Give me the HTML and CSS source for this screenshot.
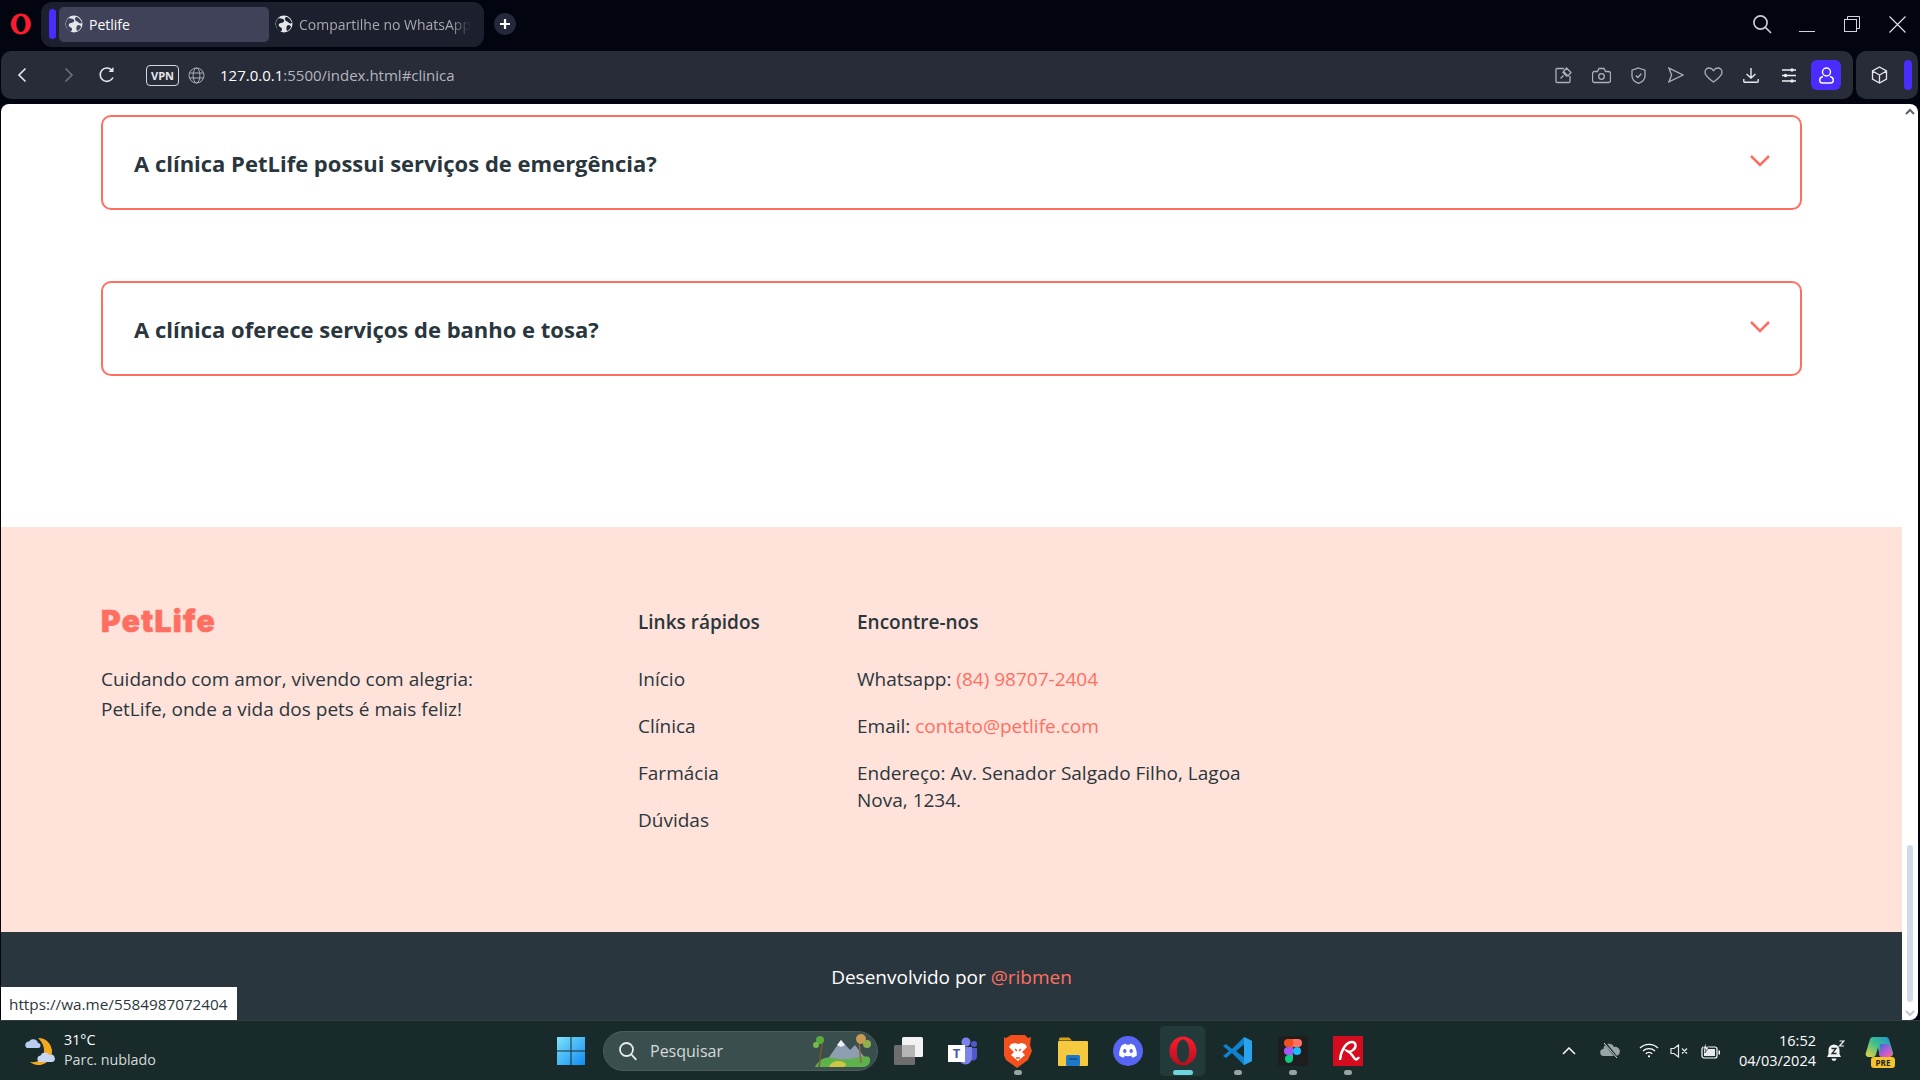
FILE: index.html
```html
<!DOCTYPE html>
<html lang="pt-BR">

<head>
  <meta charset="UTF-8">
  <meta name="viewport" content="width=device-width, initial-scale=1.0">
  <title>Petlife</title>
  <link rel="stylesheet" href="styles.css">
</head>

<body>
  <!-- Opera title bar with tabs -->
  <header class="titlebar">
    <svg class="opera-logo" width="22" height="24" viewBox="0 0 22 24"><path fill-rule="evenodd" d="M11 1.500c5.600 0 10 4.700 10 10.500s-4.400 10.500-10 10.500S1 17.800 1 12 5.400 1.500 11 1.500zM11 4C8.400 4 6.400 7.600 6.400 12s2 8 4.600 8 4.600-3.600 4.600-8-2-8-4.600-8z" fill="#ff1b2d"/></svg>
    <div class="tab-group">
      <span class="tab-accent"></span>
      <div class="tab tab-active">
        <svg class="tab-icon" width="18" height="18" viewBox="0 0 18 18"><circle cx="9" cy="9" r="8.500" fill="#e4e5ea"/><path d="M4 3c2 1 4 0 5 2s-2 3-3 3-3 1-2 3 3 1 3 3-1 2-2 3C3 16 .5 12 1 8s2-4 3-5zM12 2c2 1 4 3 5 6-2 1-3 0-4-1s-3-1-3-3 1-2 2-2zM13 10c2 0 3 1 3 2-1 2-2 3-4 4-1-2-1-5 1-6z" fill="#3f4259"/></svg>
        <span>Petlife</span>
      </div>
      <div class="tab tab-idle">
        <svg class="tab-icon" width="18" height="18" viewBox="0 0 18 18"><circle cx="9" cy="9" r="8.500" fill="#e4e5ea"/><path d="M4 3c2 1 4 0 5 2s-2 3-3 3-3 1-2 3 3 1 3 3-1 2-2 3C3 16 .5 12 1 8s2-4 3-5zM12 2c2 1 4 3 5 6-2 1-3 0-4-1s-3-1-3-3 1-2 2-2zM13 10c2 0 3 1 3 2-1 2-2 3-4 4-1-2-1-5 1-6z" fill="#1c1f2e"/></svg>
        <span class="tab-title">Compartilhe no WhatsApp</span>
      </div>
    </div>
    <button class="new-tab">
      <svg width="12" height="12" viewBox="0 0 12 12"><path d="M6 1v10M1 6h10" stroke="#fff" stroke-width="2.200"/></svg>
    </button>
    <div class="window-controls">
      <svg class="win-search" width="20" height="20" viewBox="0 0 20 20" fill="none" stroke="#c9cad0" stroke-width="1.700"><circle cx="8.500" cy="8.500" r="6.600"/><path d="M13.400 13.400l5.600 5.600"/></svg>
      <svg class="win-min" width="16" height="16" viewBox="0 0 16 16"><path d="M0 15.500h16" stroke="#d5d6da" stroke-width="1"/></svg>
      <svg class="win-max" width="16" height="16" viewBox="0 0 16 16" fill="none" stroke="#d5d6da" stroke-width="1"><rect x=".5" y="3.500" width="12" height="12"/><path d="M3.500 3.500V.5h12v12h-3"/></svg>
      <svg class="win-close" width="17" height="17" viewBox="0 0 17 17"><path d="M.5.5l16 16M16.500.5l-16 16" stroke="#e2e3e6" stroke-width="1.100"/></svg>
    </div>
  </header>

  <!-- Address bar and sidebar panel -->
  <div class="toolbar-row">
    <nav class="toolbar">
      <svg class="nav-back" width="10" height="16" viewBox="0 0 10 16"><path d="M8.500 1.500L2 8l6.500 6.500" fill="none" stroke="#e6e7ea" stroke-width="1.600"/></svg>
      <svg class="nav-forward" width="10" height="16" viewBox="0 0 10 16"><path d="M1.500 1.500L8 8l-6.500 6.500" fill="none" stroke="#6d7078" stroke-width="1.600"/></svg>
      <svg class="nav-reload" width="18" height="18" viewBox="0 0 18 18" fill="none"><path d="M15 11.500A6.700 6.700 0 1 1 13.700 4" stroke="#e6e7ea" stroke-width="1.600"/><path d="M15.500 1v5h-5z" fill="#e6e7ea"/></svg>
      <span class="vpn-badge">VPN</span>
      <svg class="globe" width="17" height="17" viewBox="0 0 17 17" fill="none" stroke="#aeb0b8" stroke-width="1"><circle cx="8.500" cy="8.500" r="7.500"/><ellipse cx="8.500" cy="8.500" rx="3.400" ry="7.500"/><path d="M1.500 6h14M1.500 11h14"/></svg>
      <span class="url"><span class="url-host">127.0.0.1</span>:5500/index.html#clinica</span>
      <div class="toolbar-actions">
        <span class="tool-slot"><svg width="17" height="17" viewBox="0 0 17 17" fill="none" stroke="#aeb0b8" stroke-width="1.300"><path d="M9 1.500H2A1 1 0 0 0 1 2.500v12a1 1 0 0 0 1 1h12a1 1 0 0 0 1-1V9"/><path d="M5.500 11.500l3-3M7.500 5l4.500 4.500M11.500 1l4.500 4.500-3 3.500-4.500-4.500z"/></svg></span>
        <span class="tool-slot"><svg width="19" height="17" viewBox="0 0 19 17" fill="none" stroke="#aeb0b8" stroke-width="1.300"><path d="M2.500 4.500h3l1.500-3h5l1.500 3h3a2 2 0 0 1 2 2v7a2 2 0 0 1-2 2h-14a2 2 0 0 1-2-2v-7a2 2 0 0 1 2-2z"/><circle cx="9.500" cy="9.500" r="2.800"/></svg></span>
        <span class="tool-slot"><svg width="15" height="17" viewBox="0 0 15 17" fill="none" stroke="#aeb0b8" stroke-width="1.300"><path d="M7.500 1L14 3.200V9c0 3.500-3 6-6.500 7.300C4 15 1 12.500 1 9V3.200z"/><path d="M4.800 8.500l2 2 3.500-3.800"/></svg></span>
        <span class="tool-slot"><svg width="16" height="16" viewBox="0 0 16 16" fill="none" stroke="#aeb0b8" stroke-width="1.300"><path d="M1 1.200L15 8 1 14.800 3.600 8z"/></svg></span>
        <span class="tool-slot"><svg width="19" height="16" viewBox="0 0 19 16" fill="none" stroke="#aeb0b8" stroke-width="1.300"><path d="M9.500 15C5 11.500 1 9 1 5.200 1 2.800 2.800 1 5 1c2 0 3.500 1 4.500 2.600C10.500 2 12 1 14 1c2.200 0 4 1.800 4 4.200C18 9 14 11.500 9.500 15z"/></svg></span>
        <span class="tool-slot"><svg width="16" height="16" viewBox="0 0 16 16" fill="none" stroke="#e6e7ea" stroke-width="1.400"><path d="M8 1v10M3.500 7L8 11l4.500-4M.8 12v2.200a1 1 0 0 0 1 1h12.400a1 1 0 0 0 1-1V12"/></svg></span>
        <span class="tool-slot"><svg width="16" height="15" viewBox="0 0 16 15" stroke="#f0f0f2" stroke-width="1.300" fill="#f0f0f2"><path d="M1 2h14M1 7.500h14M1 13h14" fill="none"/><circle cx="11" cy="2" r="1"/><circle cx="4.500" cy="7.500" r="1"/><circle cx="11" cy="13" r="1"/></svg></span>
        <span class="tool-slot">
          <span class="profile-btn">
            <svg width="15" height="17" viewBox="0 0 15 17" fill="none" stroke="#fff" stroke-width="1.400"><circle cx="7.500" cy="5" r="4"/><path d="M4 9.500c-2 .5-3.300 2-3.300 3.700 0 1.800 1.300 2.800 3 2.800h7.600c1.700 0 3-1 3-2.800 0-1.700-1.300-3.200-3.300-3.700"/></svg>
          </span>
        </span>
      </div>
    </nav>
    <aside class="side-panel">
      <svg width="17" height="18" viewBox="0 0 17 18" fill="none" stroke="#e6e7ea" stroke-width="1.300"><path d="M8.500 1l7 4v8l-7 4-7-4V5zM1.500 5l7 4 7-4M8.500 9v8"/></svg>
      <span class="panel-accent"></span>
    </aside>
  </div>

  <!-- The page being viewed -->
  <main class="viewport">
    <div class="page">
      <section class="faq">
        <div class="faq-item">
          <h3>A clínica PetLife possui serviços de emergência?</h3>
          <svg class="chevron" width="20" height="12" viewBox="0 0 20 12"><path d="M1 1l9 9 9-9" fill="none" stroke="#ff6f61" stroke-width="2.500"/></svg>
        </div>
        <div class="faq-item">
          <h3>A clínica oferece serviços de banho e tosa?</h3>
          <svg class="chevron" width="20" height="12" viewBox="0 0 20 12"><path d="M1 1l9 9 9-9" fill="none" stroke="#ff6f61" stroke-width="2.500"/></svg>
        </div>
      </section>

      <footer class="footer">
        <div class="footer-brand">
          <div class="logo">PetLife</div>
          <p>Cuidando com amor, vivendo com alegria:<br>PetLife, onde a vida dos pets é mais feliz!</p>
        </div>
        <div class="footer-links">
          <h4>Links rápidos</h4>
          <ul>
            <li>Início</li>
            <li>Clínica</li>
            <li>Farmácia</li>
            <li>Dúvidas</li>
          </ul>
        </div>
        <div class="footer-contact">
          <h4>Encontre-nos</h4>
          <ul>
            <li>Whatsapp: <a>(84) 98707-2404</a></li>
            <li>Email: <a>contato@petlife.com</a></li>
            <li>Endereço: Av. Senador Salgado Filho, Lagoa Nova, 1234.</li>
          </ul>
        </div>
      </footer>

      <div class="credits">Desenvolvido por <a>@ribmen</a></div>
    </div>

    <div class="scrollbar">
      <svg class="scroll-arrow" width="10" height="7" viewBox="0 0 10 7"><path d="M1 6l4-4 4 4" fill="none" stroke="#5d6268" stroke-width="2"/></svg>
      <span class="scroll-track"><span class="scroll-thumb"></span></span>
      <svg class="scroll-arrow" width="10" height="7" viewBox="0 0 10 7"><path d="M1 1l4 4 4-4" fill="none" stroke="#c4c8cc" stroke-width="2"/></svg>
    </div>

    <div class="status-link">https://wa.me/5584987072404</div>
  </main>

  <!-- Windows taskbar -->
  <footer class="taskbar">
    <div class="weather">
      <svg width="32" height="30" viewBox="0 0 32 30">
        <path d="M14 2a13.500 13.500 0 1 1-8 24c9 1 15-4 14-12 0-5-3-9-6-12z" fill="#f4a81e"/>
        <path d="M3 12a3.500 3.500 0 0 1 2-6.500 5 5 0 0 1 9 1.500 2.500 2.500 0 0 1 0 5z" fill="#b9cdf0"/>
        <path d="M15 26a3.500 3.500 0 0 1 1.500-6.500 5 5 0 0 1 9-.5 3.500 3.500 0 0 1 3 7z" fill="#c6d6f2"/>
      </svg>
      <div class="weather-text">
        <span class="weather-temp">31°C</span>
        <span class="weather-desc">Parc. nublado</span>
      </div>
    </div>

    <div class="task-center">
      <svg class="task-icon" width="30" height="30" viewBox="0 0 30 30">
        <defs><linearGradient id="winGrad" x1="0" y1="0" x2="1" y2="1"><stop offset="0" stop-color="#7fe3fb"/><stop offset="1" stop-color="#0f8cf2"/></linearGradient></defs>
        <path d="M1 1h13.500v13.500H1zM15.500 1H29v13.500H15.500zM1 15.500h13.500V29H1zM15.500 15.500H29V29H15.500z" fill="url(#winGrad)"/>
      </svg>
      <div class="search-box">
        <svg width="20" height="20" viewBox="0 0 20 20" fill="none" stroke="#e6eaea" stroke-width="1.800"><circle cx="8.500" cy="8.500" r="6.500"/><path d="M13.300 13.300l5 5.500"/></svg>
        <span>Pesquisar</span>
        <svg class="search-art" width="62" height="36" viewBox="0 0 62 36">
          <path d="M14 30L30 7l9 10 5-5 14 18z" fill="#8f9db0"/>
          <path d="M26 12l4-5 4 5-4 2z" fill="#eef2f6"/>
          <path d="M4 34c6-12 16-10 24-8s24-4 30-2c3 4 0 10-6 10z" fill="#5fb14c"/>
          <path d="M18 34c2-6 10-8 16-4 2 2 0 4-2 4z" fill="#d1c544"/>
          <path d="M8 34L11 10" stroke="#7a5a2b" stroke-width="1.500"/>
          <circle cx="9" cy="7" r="4" fill="#5aa83e"/>
          <circle cx="5" cy="12" r="3" fill="#6ebc4a"/>
          <path d="M50 30L48 8" stroke="#8a6a3a" stroke-width="1.500"/>
          <circle cx="50" cy="6" r="5" fill="#c89a55"/>
          <circle cx="56" cy="11" r="4" fill="#8fb04a"/>
        </svg>
      </div>
      <!-- Task view -->
      <svg class="task-icon" width="30" height="30" viewBox="0 0 30 30">
        <rect x="1" y="9" width="21" height="20" rx="1.500" fill="#6d6d6d"/>
        <rect x="9" y="1" width="21" height="20" rx="1.500" fill="#f2f2f2"/>
        <rect x="9" y="9" width="13" height="12" fill="#b5b5b5"/>
      </svg>
      <!-- Teams -->
      <span class="task-icon teams">
        <svg width="30" height="30" viewBox="0 0 30 30">
          <circle cx="18" cy="6" r="4.500" fill="#7b83eb"/>
          <circle cx="26" cy="8" r="3" fill="#5059c9"/>
          <path d="M21 12h8v9a4 4 0 0 1-6 3z" fill="#5059c9"/>
          <path d="M11 11h13v11a6.500 6.500 0 0 1-13 0z" fill="#7b83eb"/>
        </svg>
        <b class="teams-t">T</b>
      </span>
      <!-- Brave -->
      <span class="task-icon has-dot">
        <svg width="28" height="34" viewBox="0 0 28 34">
          <path d="M7 1h14l3 3 3-1-1 8 2 6-4 9-11 8-11-8-4-9 2-6-1-8 3 1z" fill="#f4501e"/>
          <path d="M7 10l4-1 3 1 3-1 4 1 2 3-5 5 3 3-7 6-7-6 3-3-5-5z" fill="#fff"/>
          <path d="M11 15l2 2M17 15l-2 2M12 24h4" stroke="#f4501e" stroke-width="1.400"/>
        </svg>
      </span>
      <!-- File explorer -->
      <svg class="task-icon" width="30" height="30" viewBox="0 0 30 30">
        <path d="M1 3a1.500 1.500 0 0 1 1.500-1.500H11l3 3h-13z" fill="#d9a11a"/>
        <rect x="0" y="5" width="30" height="25" rx="1" fill="#f7c93e"/>
        <rect x="8" y="19" width="14" height="11" rx="1.500" fill="#1d78c8"/>
        <path d="M11 23h8" stroke="#0c4f8c" stroke-width="1.500"/>
      </svg>
      <!-- Discord -->
      <svg class="task-icon" width="30" height="30" viewBox="0 0 30 30">
        <circle cx="15" cy="15" r="15" fill="#5865f2"/>
        <path d="M9 9c2-1 3.500-1.300 4-1.300l.5 1h3l.5-1c.5 0 2 .3 4 1.300 2 3 3 6.500 2.800 10.500-1.500 1.200-3 1.800-4.500 2.200l-1-1.700 1.500-.8c-3 1.300-6.600 1.300-9.600 0l1.500.8-1 1.700c-1.500-.4-3-1-4.500-2.200C6 15.500 7 12 9 9z" fill="#fff"/>
        <ellipse cx="11.800" cy="15" rx="1.700" ry="2" fill="#5865f2"/>
        <ellipse cx="18.200" cy="15" rx="1.700" ry="2" fill="#5865f2"/>
      </svg>
      <!-- Opera, the active window -->
      <span class="task-icon task-active">
        <svg width="28" height="30" viewBox="0 0 28 30">
          <defs><linearGradient id="operaGrad" x1="0" y1="0" x2="0" y2="1"><stop offset="0" stop-color="#ff1b2d"/><stop offset="1" stop-color="#b3101f"/></linearGradient></defs>
          <path fill-rule="evenodd" d="M14 .5c7.500 0 13.500 6.500 13.500 14.500S21.500 29.500 14 29.500.5 23 .5 15 6.500.5 14 .5zM14 3.500c-3.500 0-6.200 5.100-6.200 11.500s2.700 11.500 6.200 11.500 6.200-5.100 6.200-11.500S17.500 3.500 14 3.500z" fill="url(#operaGrad)"/>
        </svg>
      </span>
      <!-- VS Code -->
      <span class="task-icon has-dot">
        <svg width="30" height="30" viewBox="0 0 30 30">
          <path d="M21 1l8 4v20l-8 4-12-12-6 5-3-2 6-5-6-5 3-2 6 5zM21 8.500L13 15l8 6.500z" fill="#0f82d1"/>
          <path d="M21 1l8 4v20l-8 4z" fill="#2aa3ef"/>
        </svg>
      </span>
      <!-- Figma -->
      <span class="task-icon has-dot">
        <svg class="figma" width="30" height="30" viewBox="0 0 30 30">
          <rect width="30" height="30" rx="2" fill="#1e1e1e"/>
          <path d="M10 3h5v8h-5a4 4 0 0 1 0-8z" fill="#f24e1e"/>
          <path d="M15 3h5a4 4 0 0 1 0 8h-5z" fill="#ff7262"/>
          <path d="M10 11h5v8h-5a4 4 0 0 1 0-8z" fill="#a259ff"/>
          <circle cx="19" cy="15" r="4" fill="#1abcfe"/>
          <path d="M10 19h5v4a4 4 0 1 1-5-4z" fill="#0acf83"/>
        </svg>
      </span>
      <!-- Avira -->
      <span class="task-icon has-dot">
        <svg width="30" height="30" viewBox="0 0 30 30">
          <rect width="30" height="30" fill="#d50c1f"/>
          <path d="M7 24C8 14 13 6 19 6c4 0 5 5 1 8-2 2-5 2-6 1 4 1 6 6 8 8 1 1 3 0 4-2" fill="none" stroke="#fff" stroke-width="2.400"/>
        </svg>
      </span>
    </div>

    <div class="tray">
      <svg width="14" height="8" viewBox="0 0 14 8"><path d="M1 7l6-6 6 6" fill="none" stroke="#fff" stroke-width="1.500"/></svg>
      <svg class="tray-cloud" width="21" height="17" viewBox="0 0 21 17"><path d="M4 14a3.500 3.500 0 0 1-.5-7A5.500 5.500 0 0 1 14 5a4.500 4.500 0 0 1 2.500 9z" fill="#9aa5a5"/><path d="M5 1l12 15" stroke="#16292a" stroke-width="2.500"/><path d="M4 1l13 15" stroke="#d5dada" stroke-width="1"/></svg>
      <svg class="tray-wifi" width="20" height="15" viewBox="0 0 20 15" fill="none" stroke="#fff" stroke-width="1.300"><path d="M1 5a13 13 0 0 1 18 0M4 8a9 9 0 0 1 12 0M6.800 10.800a4.500 4.500 0 0 1 6.400 0"/><circle cx="10" cy="13.300" r="1.100" fill="#fff" stroke="none"/></svg>
      <svg class="tray-sound" width="19" height="14" viewBox="0 0 19 14" fill="none" stroke="#e6eaea" stroke-width="1.200"><path d="M1 4.500h3L8.500 1v12L4 9.500H1zM12 4.500l5 5M17 4.500l-5 5"/></svg>
      <svg class="tray-battery" width="20" height="16" viewBox="0 0 20 16"><rect x="1" y="4" width="15" height="11" rx="2" fill="none" stroke="#fff" stroke-width="1.200"/><rect x="3" y="6" width="11" height="7" fill="#e6eaea"/><path d="M17.500 7.500h1.500v4h-1.500z" fill="#fff"/><path d="M5 0L2 6h3l-1 4 4-6H5z" fill="#fff" stroke="#16292a" stroke-width=".6"/></svg>
      <div class="clock">
        <span>16:52</span>
        <span>04/03/2024</span>
      </div>
      <svg class="tray-bell" width="18" height="22" viewBox="0 0 18 22"><path d="M7 4.500a5.500 5.500 0 0 0-5.500 5.500v4L0 17h14l-1.500-3v-4A5.500 5.500 0 0 0 7 4.500zM4.500 18.500h5a2.500 2.500 0 0 1-5 0z" fill="#f2f4f4"/><path d="M4.500 8.500h4.500l-4 5h4.500" fill="none" stroke="#192a2b" stroke-width="1.300"/><path d="M12.500 1h4.500l-4.500 5H17" fill="none" stroke="#f2f4f4" stroke-width="1.200"/></svg>
      <span class="copilot">
        <svg width="29" height="25" viewBox="0 0 29 25">
          <defs>
            <linearGradient id="copA" x1="0" y1="1" x2="1" y2="0"><stop offset="0" stop-color="#f0d23c"/><stop offset=".5" stop-color="#3fc08a"/><stop offset="1" stop-color="#1e8fe0"/></linearGradient>
            <linearGradient id="copB" x1="0" y1="0" x2="1" y2="1"><stop offset="0" stop-color="#2f6fe0"/><stop offset=".6" stop-color="#c95ad0"/><stop offset="1" stop-color="#f06a8a"/></linearGradient>
          </defs>
          <path d="M8 1h13c1.500 0 2.500 1 3 2.500l4 13c.5 2-1 4-3 4H15l-2-9-2 7c-.5 1.500-1.500 2.500-3 2.500H4c-2.500 0-4-2-3-4.500L5 3c.5-1.200 1.500-2 3-2z" fill="url(#copA)"/>
          <path d="M15 8h7c1.500 0 2.500 1 3 2.500l2.500 7c.5 2-1 3.500-3 3.500H17c-1.500 0-2.500-1-3-2.500z" fill="url(#copB)"/>
        </svg>
        <b class="pre-badge">PRE</b>
      </span>
    </div>
  </footer>
</body>

</html>
```

FILE: styles.css
```css
/* Reset */
* {
  box-sizing: border-box;
}

html,
body {
  margin: 0;
  padding: 0;
  height: 100%;
  overflow: hidden;
}

body {
  display: flex;
  flex-direction: column;
  background-color: #02040f;
  font-family: "Open Sans", "Noto Sans", sans-serif;
  color: #2a363d;
}

h3,
h4,
p,
ul {
  margin: 0;
  padding: 0;
}

ul {
  list-style: none;
}

svg {
  display: block;
  flex-shrink: 0;
}

/* Title bar */
.titlebar {
  display: flex;
  align-items: center;
  height: 51px;
  padding: 0 0 3px 10px;
}

.opera-logo {
  margin-right: 9px;
}

.tab-group {
  display: flex;
  align-items: center;
  width: 443px;
  height: 45px;
  padding-left: 8px;
  background-color: #1c1f2e;
  border-radius: 11px;
}

.tab-accent {
  width: 7px;
  height: 30px;
  margin-right: 3px;
  background-color: #4a2cff;
  border-radius: 4px;
}

.tab {
  display: flex;
  align-items: center;
  gap: 6px;
  height: 35px;
  padding-left: 6px;
  font-size: 14px;
}

.tab-active {
  width: 210px;
  background-color: #3f4259;
  border-radius: 5px;
  color: #fff;
}

.tab-idle {
  width: 206px;
  color: #a8a9b0;
}

.tab-title {
  width: 172px;
  overflow: hidden;
  white-space: nowrap;
  -webkit-mask-image: linear-gradient(to right, #000 88%, transparent);
  mask-image: linear-gradient(to right, #000 88%, transparent);
}

.new-tab {
  display: flex;
  align-items: center;
  justify-content: center;
  width: 22px;
  height: 22px;
  margin-left: 10px;
  padding: 0;
  border: none;
  border-radius: 50%;
  background-color: #25283a;
}

.window-controls {
  display: flex;
  align-items: center;
  margin-left: auto;
}

.win-min {
  margin-left: 27px;
}

.win-max {
  margin-left: 29px;
}

.win-close {
  margin-left: 29px;
  margin-right: 14px;
}

/* Address bar */
.toolbar-row {
  display: flex;
  gap: 3px;
  height: 48px;
  padding: 0 2px 0 1px;
}

.toolbar {
  flex: 1;
  display: flex;
  align-items: center;
  padding-left: 16px;
  background-color: #282c39;
  border-radius: 10px;
}

.nav-forward {
  margin-left: 37px;
}

.nav-reload {
  margin-left: 24px;
}

.vpn-badge {
  width: 33px;
  height: 21px;
  margin-left: 30px;
  border: 1px solid #d7d8dc;
  border-radius: 4px;
  font-size: 11px;
  font-weight: 700;
  line-height: 19px;
  text-align: center;
  color: #e6e7ea;
}

.globe {
  margin-left: 9px;
}

.url {
  margin-left: 15px;
  font-size: 15px;
  color: #b4b6bc;
}

.url-host {
  color: #fff;
}

.toolbar-actions {
  display: flex;
  align-items: center;
  margin-left: auto;
  margin-right: 8px;
}

.tool-slot {
  display: flex;
  align-items: center;
  justify-content: center;
  width: 37.5px;
}

.profile-btn {
  display: flex;
  align-items: center;
  justify-content: center;
  width: 30px;
  height: 30px;
  background-color: #4a2cff;
  border-radius: 6px;
}

.side-panel {
  display: flex;
  align-items: center;
  width: 62px;
  padding-left: 15px;
  background-color: #282c39;
  border-radius: 10px;
}

.panel-accent {
  width: 8px;
  height: 30px;
  margin-left: 16px;
  background-color: #4a2cff;
  border-radius: 4px;
}

/* Viewport */
.viewport {
  position: relative;
  display: flex;
  height: 916px;
  margin: 5px 2px 0 1px;
  overflow: hidden;
  background-color: #fff;
  border-radius: 8px 8px 8px 0;
}

.page {
  flex: 1;
  min-width: 0;
}

.faq {
  display: flex;
  flex-direction: column;
  gap: 71px;
  padding: 11px 100px 151px;
}

.faq-item {
  display: flex;
  align-items: center;
  justify-content: space-between;
  height: 95px;
  padding: 0 30px 0 31px;
  border: 2px solid #ff6f61;
  border-radius: 10px;
}

.faq-item h3 {
  font-size: 22px;
  font-weight: 700;
  color: #2a363d;
}

.chevron {
  margin-top: -4px;
}

/* Footer */
.footer {
  display: flex;
  height: 405px;
  padding: 80px 100px 0;
  background-color: #ffe2d9;
  font-size: 19px;
}

.footer h4 {
  margin-bottom: 29px;
  font-size: 19px;
  font-weight: 600;
  line-height: 30px;
}

.footer li + li {
  margin-top: 20px;
}

.footer li {
  line-height: 27px;
}

.footer a,
.credits a {
  color: #ff6f61;
}

.footer-brand {
  width: 537px;
}

.logo {
  margin-top: -1px;
  margin-bottom: 28px;
  font-family: "Inter", sans-serif;
  font-size: 30px;
  font-weight: 900;
  letter-spacing: 1.3px;
  line-height: 30px;
  color: #ff6f61;
  -webkit-text-stroke: 0.6px #ff6f61;
}

.footer-brand p {
  line-height: 30px;
}

.footer-links {
  width: 219px;
}

.footer-contact {
  width: 420px;
}

.credits {
  height: 88px;
  padding-top: 30px;
  background-color: #2a363d;
  font-size: 19px;
  line-height: 30px;
  text-align: center;
  color: #fff;
}

/* Scrollbar and link preview */
.scrollbar {
  display: flex;
  flex-direction: column;
  align-items: center;
  width: 16px;
  padding: 4px 0 3px;
}

.scroll-track {
  flex: 1;
  display: flex;
  align-items: flex-end;
  width: 6px;
  padding-bottom: 8px;
}

.scroll-thumb {
  width: 6px;
  height: 157px;
  background-color: #cfdce6;
  border-radius: 3px;
}

.status-link {
  position: absolute;
  left: 0;
  bottom: 0;
  width: 236px;
  height: 33px;
  padding-left: 8px;
  background-color: #fff;
  font-size: 15.3px;
  line-height: 34px;
  color: #2a363d;
}

/* Taskbar */
.taskbar {
  display: flex;
  align-items: center;
  height: 60px;
  background-color: #192a2b;
  border-top: 1px solid #2f3d3e;
  color: #fff;
}

.weather {
  display: flex;
  align-items: center;
  gap: 8px;
  width: 556px;
  padding-left: 24px;
}

.weather-text {
  display: flex;
  flex-direction: column;
  margin-top: -2px;
  font-size: 14.3px;
  line-height: 20px;
}

.weather-desc {
  color: #d5dada;
}

.task-center {
  display: flex;
  align-items: center;
}

.task-icon {
  position: relative;
  display: flex;
  align-items: center;
  justify-content: center;
  width: 30px;
  height: 30px;
  margin-right: 25px;
}

.search-box {
  display: flex;
  align-items: center;
  gap: 12px;
  width: 275px;
  height: 40px;
  margin-left: -8px;
  margin-right: 15px;
  padding: 0 4px 0 14px;
  background-color: #3a4e4e;
  border: 1px solid #4a5c5c;
  border-radius: 20px;
  font-size: 16px;
  color: #d5dada;
}

.search-art {
  margin-left: auto;
}

.teams-t {
  position: absolute;
  left: 0;
  top: 9px;
  width: 17px;
  height: 17px;
  background-color: #fff;
  font-size: 13px;
  line-height: 17px;
  text-align: center;
  color: #4b53bc;
}

.has-dot::after {
  content: "";
  position: absolute;
  left: 11px;
  bottom: -9px;
  width: 8px;
  height: 5px;
  background-color: #9aa3a3;
  border-radius: 3px;
}

.task-active {
  z-index: 0;
}

.task-active::before {
  content: "";
  position: absolute;
  z-index: -1;
  left: -8px;
  right: -6px;
  top: -10px;
  bottom: -10px;
  background-color: #233a3a;
  border-radius: 4px;
  box-shadow: 4px 0 0 -2px #1f3333;
}

.task-active::after {
  content: "";
  position: absolute;
  left: 5px;
  bottom: -9px;
  width: 20px;
  height: 5px;
  background-color: #6fd4dc;
  border-radius: 3px;
}

.tray {
  display: flex;
  align-items: center;
  margin-left: auto;
  padding-right: 25px;
}

.tray-cloud {
  margin-left: 24px;
}

.tray-wifi {
  margin-left: 18px;
}

.tray-sound {
  margin-left: 11px;
}

.tray-battery {
  margin-left: 12px;
}

.clock {
  display: flex;
  flex-direction: column;
  align-items: flex-end;
  margin-left: 18px;
  font-size: 14.5px;
  line-height: 20px;
}

.tray-bell {
  margin-left: 11px;
}

.copilot {
  position: relative;
  display: flex;
  width: 30px;
  height: 30px;
  margin-left: 20px;
}

.pre-badge {
  position: absolute;
  left: 6px;
  bottom: -2px;
  width: 24px;
  height: 11px;
  background-color: #f6c32c;
  border-radius: 3px;
  font-size: 8px;
  line-height: 11px;
  text-align: center;
  color: #222;
}
```
